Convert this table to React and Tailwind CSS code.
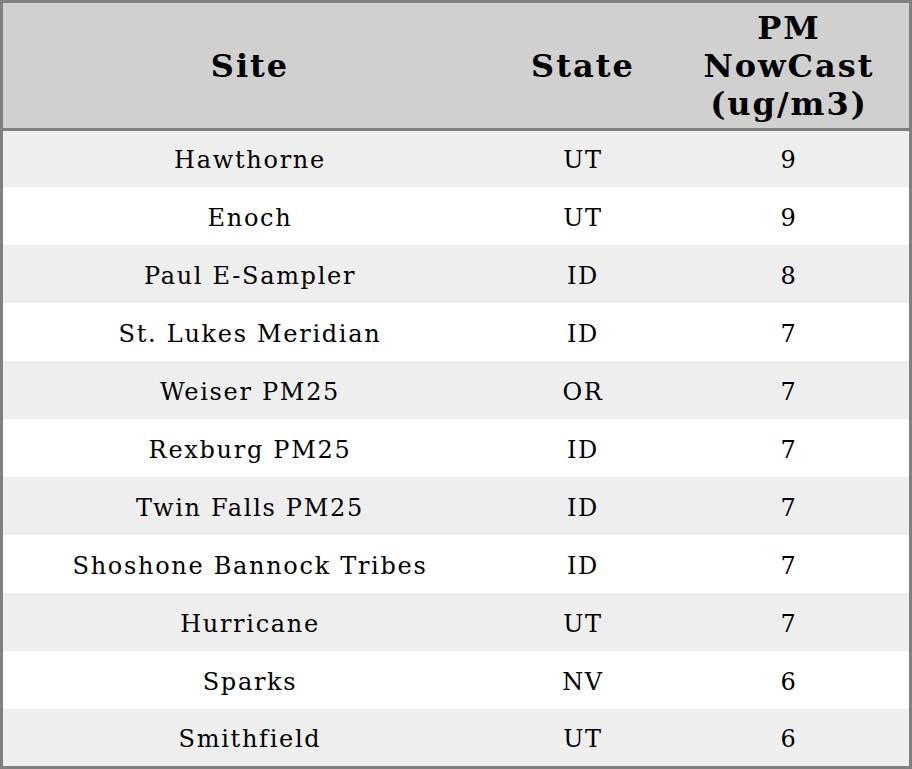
const rows = [
  ['Hawthorne', 'UT', '9'],
  ['Enoch', 'UT', '9'],
  ['Paul E-Sampler', 'ID', '8'],
  ['St. Lukes Meridian', 'ID', '7'],
  ['Weiser PM25', 'OR', '7'],
  ['Rexburg PM25', 'ID', '7'],
  ['Twin Falls PM25', 'ID', '7'],
  ['Shoshone Bannock Tribes', 'ID', '7'],
  ['Hurricane', 'UT', '7'],
  ['Sparks', 'NV', '6'],
  ['Smithfield', 'UT', '6'],
];

export default function App() {
  return (
    <div className="w-[912px] h-[769px] bg-white border-[3px] border-[#808080] text-black font-['DejaVu_Serif',serif] flex flex-col overflow-hidden">
      <div className="grid grid-cols-[494px_172px_1fr] h-[125px] shrink-0 bg-[#d0d0d0] border-b-[3px] border-[#808080] box-content text-[32px] font-bold leading-[38px] tracking-[2px]">
        <div className="flex items-center justify-center text-center">Site</div>
        <div className="flex items-center justify-center text-center">State</div>
        <div className="flex items-center justify-center text-center">PM<br />NowCast<br />(ug/m3)</div>
      </div>
      <div className="flex flex-col">
        {rows.map((r, i) => (
          <div
            key={r[0]}
            className={`grid grid-cols-[494px_172px_1fr] shrink-0 text-[24px] leading-[28px] tracking-[1.7px] ${i === 0 ? 'h-[56px] pt-[2px]' : i === rows.length - 1 ? 'h-[57px] pt-[3px]' : 'h-[58px] pt-[4px]'} ${i % 2 === 0 ? 'bg-[#eeeeee]' : 'bg-white'}`}
          >
            <div className="flex items-center justify-center">{r[0]}</div>
            <div className="flex items-center justify-center">{r[1]}</div>
            <div className="flex items-center justify-center">{r[2]}</div>
          </div>
        ))}
      </div>
    </div>
  );
}
